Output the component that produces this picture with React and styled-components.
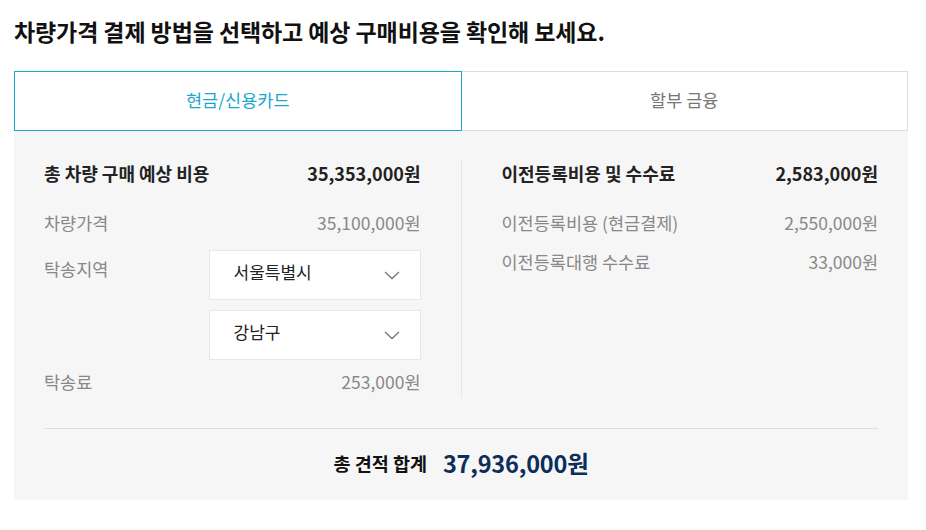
import React from "react";
import styled, { createGlobalStyle } from "styled-components";

const Global = createGlobalStyle`
  html, body { margin: 0; padding: 0; background: #fff; }
  body { font-family: "Noto Sans CJK KR", "Noto Sans", sans-serif; color: #222; }
  * { box-sizing: border-box; }
`;

const Page = styled.div`
  width: 926px;
  padding: 14px 18px 0 14px;
`;

const Title = styled.h2`
  margin: 0;
  font-size: 23px;
  line-height: 34px;
  font-weight: 700;
  color: #111;
  letter-spacing: -0.1px;
`;

const Tabs = styled.div`
  display: flex;
  margin-top: 23px;
  height: 60px;
`;

const Tab = styled.button`
  flex: 1;
  border: 1px solid ${(p) => (p.$active ? "#1aa8ca" : "#dcdcdc")};
  ${(p) => (p.$active ? "" : "border-left: none;")}
  background: #fff;
  color: ${(p) => (p.$active ? "#1aa8ca" : "#777")};
  font-family: inherit;
  font-size: 17.5px;
  padding: 0 0 4px;
  cursor: pointer;
`;

const Panel = styled.div`
  background: #f6f6f6;
  padding: 29px 30px 0;
`;

const Columns = styled.div`
  display: grid;
  grid-template-columns: 1fr 1px 1fr;
  column-gap: 40px;
`;

const Divider = styled.div`
  background: #e6e6e6;
`;

const Column = styled.div`
  display: flex;
  flex-direction: column;
  padding-bottom: 3px;
`;

const Row = styled.div`
  display: flex;
  justify-content: space-between;
  align-items: flex-start;
  margin-top: ${(p) => p.$mt || 0}px;
  font-size: ${(p) => (p.$head ? 18 : 17.5)}px;
  line-height: 26px;
  color: ${(p) => (p.$head ? "#222" : "#888")};
  font-weight: ${(p) => (p.$head ? 700 : 400)};
`;

const Label = styled.span`
  line-height: ${(p) => p.$lh || 26}px;
`;

const Selects = styled.div`
  display: flex;
  flex-direction: column;
  gap: 10px;
`;

const Select = styled.div`
  width: 212px;
  height: 50px;
  background: #fff;
  border: 1px solid #e8e8e8;
  display: flex;
  align-items: center;
  justify-content: space-between;
  padding: 0 20px 0 24px;
  font-size: 17px;
  color: #222;
  font-weight: 400;
`;

const SelectText = styled.span`
  line-height: 26px;
  padding-bottom: 7px;
`;

const Chevron = () => (
  <svg width="16" height="9" viewBox="0 0 16 9" fill="none">
    <path d="M1 1l7 6.5L15 1" stroke="#777" strokeWidth="1.3" />
  </svg>
);

const HLine = styled.div`
  height: 1px;
  background: #dddddd;
  margin-top: 30px;
`;

const Total = styled.div`
  height: 71px;
  display: flex;
  align-items: center;
  justify-content: center;
  gap: 16px;
  padding-bottom: 4px;
`;

const TotalLabel = styled.span`
  font-size: 18.5px;
  font-weight: 700;
  color: #111;
`;

const TotalValue = styled.span`
  font-size: 23.5px;
  font-weight: 700;
  color: #0d2d5a;
  letter-spacing: -0.2px;
`;

export default function App() {
  return (
    <>
      <Global />
      <Page>
        <Title>차량가격 결제 방법을 선택하고 예상 구매비용을 확인해 보세요.</Title>
        <Tabs>
          <Tab $active>현금/신용카드</Tab>
          <Tab>할부 금융</Tab>
        </Tabs>
        <Panel>
          <Columns>
            <Column>
              <Row $head>
                <span>총 차량 구매 예상 비용</span>
                <span>35,353,000원</span>
              </Row>
              <Row $mt={24}>
                <span>차량가격</span>
                <span>35,100,000원</span>
              </Row>
              <Row $mt={14}>
                <Label $lh={38}>탁송지역</Label>
                <Selects>
                  <Select>
                    <SelectText>서울특별시</SelectText>
                    <Chevron />
                  </Select>
                  <Select>
                    <SelectText>강남구</SelectText>
                    <Chevron />
                  </Select>
                </Selects>
              </Row>
              <Row $mt={9}>
                <span>탁송료</span>
                <span>253,000원</span>
              </Row>
            </Column>
            <Divider />
            <Column>
              <Row $head>
                <span>이전등록비용 및 수수료</span>
                <span>2,583,000원</span>
              </Row>
              <Row $mt={24}>
                <span>이전등록비용 (현금결제)</span>
                <span>2,550,000원</span>
              </Row>
              <Row $mt={13}>
                <span>이전등록대행 수수료</span>
                <span>33,000원</span>
              </Row>
            </Column>
          </Columns>
          <HLine />
          <Total>
            <TotalLabel>총 견적 합계</TotalLabel>
            <TotalValue>37,936,000원</TotalValue>
          </Total>
        </Panel>
      </Page>
    </>
  );
}
